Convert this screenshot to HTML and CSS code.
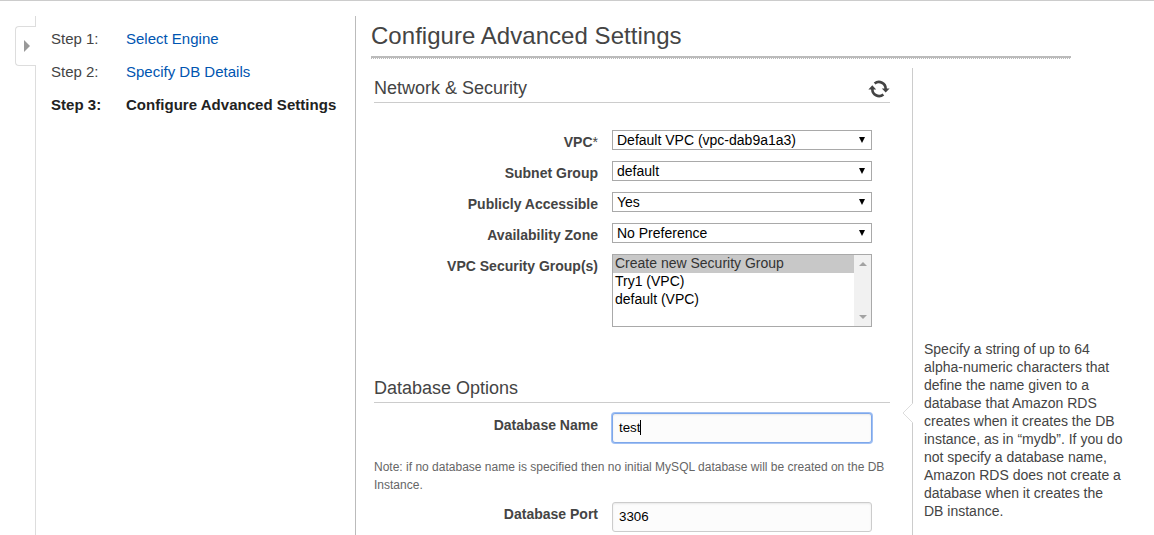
FILE: index.html
```html
<!DOCTYPE html>
<html lang="en">
<head>
<meta charset="utf-8">
<title>Configure Advanced Settings</title>
<link rel="stylesheet" href="styles.css">
</head>
<body>
<div class="page">
  <nav class="steps">
    <span class="collapse-tab"><svg width="6" height="12" viewBox="0 0 6 12"><path d="M0 0L6 6L0 12Z" fill="#999"/></svg></span>
    <div class="step"><span class="step-no">Step 1:</span><a class="step-link">Select Engine</a></div>
    <div class="step"><span class="step-no">Step 2:</span><a class="step-link">Specify DB Details</a></div>
    <div class="step current"><span class="step-no">Step 3:</span><span class="step-link">Configure Advanced Settings</span></div>
  </nav>
  <main class="main">
    <h1 class="title"><span>Configure Advanced Settings</span></h1>
    <div class="title-rule"></div>
    <div class="columns">
      <div class="form">
        <h2 class="section"><span>Network &amp; Security</span>
          <svg class="refresh" width="22" height="18" viewBox="0 0 22 18"><g fill="none" stroke="#444" stroke-width="2.6"><path d="M6.6 3.6A6.7 6.7 0 0 1 17.6 9.2"/><path d="M15.4 14.4A6.7 6.7 0 0 1 4.4 8.8"/></g><path d="M13.8 8.4H21.6L17.7 12.4ZM0.4 9.6H8.2L4.3 5.2Z" fill="#444"/></svg>
        </h2>
        <div class="rows">
          <div class="row"><label class="label">VPC<span class="star">*</span></label><div class="select"><span>Default VPC (vpc-dab9a1a3)</span><i class="arrow"></i></div></div>
          <div class="row"><label class="label">Subnet Group</label><div class="select"><span>default</span><i class="arrow"></i></div></div>
          <div class="row"><label class="label">Publicly Accessible</label><div class="select"><span>Yes</span><i class="arrow"></i></div></div>
          <div class="row"><label class="label">Availability Zone</label><div class="select"><span>No Preference</span><i class="arrow"></i></div></div>
          <div class="row"><label class="label">VPC Security Group(s)</label>
            <div class="listbox">
              <div class="options"><div class="option selected">Create new Security Group</div><div class="option">Try1 (VPC)</div><div class="option">default (VPC)</div></div>
              <div class="scrollbar"><i class="up"></i><i class="down"></i></div>
            </div>
          </div>
        </div>
        <h2 class="section database"><span>Database Options</span></h2>
        <div class="row field name"><label class="label">Database Name</label><div class="input focused"><span>test</span><i class="caret"></i></div></div>
        <p class="note">Note: if no database name is specified then no initial MySQL database will be created on the DB<br>Instance.</p>
        <div class="row field"><label class="label">Database Port</label><div class="input"><span>3306</span></div></div>
      </div>
      <aside class="help">
        <svg class="pointer" width="11" height="20" viewBox="0 0 11 20"><path d="M11 0L1 10L11 20" fill="#fff" stroke="#ddd"/></svg>
        <p class="help-text">Specify a string of up to 64<br>alpha-numeric characters that<br>define the name given to a<br>database that Amazon RDS<br>creates when it creates the DB<br>instance, as in “mydb”. If you do<br>not specify a database name,<br>Amazon RDS does not create a<br>database when it creates the<br>DB instance.</p>
      </aside>
    </div>
  </main>
</div>
</body>
</html>
```
FILE: styles.css
```css
* { box-sizing: border-box; }
body { margin: 0; background: #fff; color: #444; font-family: "Liberation Sans", Arial, sans-serif; font-size: 14px; overflow: hidden; }
h1, h2, p { margin: 0; font-weight: normal; }
.page { height: 535px; border-top: 1px solid #ccc; padding: 15px 0 0 35px; display: flex; overflow: hidden; }
.steps { position: relative; width: 321px; height: 519px; flex: none; border-left: 1px solid #ddd; border-right: 1px solid #bbb; padding: 6px 0 0 15px; }
.collapse-tab { position: absolute; left: -21px; top: 10px; width: 21px; height: 40px; background: #fff; border: 1px solid #ddd; border-right: 0; border-radius: 4px 0 0 4px; display: flex; align-items: center; padding-left: 8px; }
.step { display: flex; height: 33px; line-height: 33px; font-size: 15px; }
.step-no { width: 75px; }
a.step-link { color: #0055b1; }
.current { color: #222; font-weight: bold; letter-spacing: 0.03px; }
.main { width: 715px; padding-left: 15px; flex: none; }
.title { height: 40px; line-height: 40px; font-size: 24px; letter-spacing: 0.04px; }
.title-rule { height: 3px; border-top: 2px solid #bbb; background: repeating-linear-gradient(90deg, #bbb 0 1px, #fff 1px 2px); }
.columns { display: flex; padding: 9px 0 0 3px; }
.form { width: 516px; flex: none; }
.section { display: flex; justify-content: space-between; align-items: center; height: 35px; border-bottom: 1px solid #ccc; font-size: 18px; padding-top: 7px; }
.rows { display: flex; flex-direction: column; gap: 11px; padding-top: 27px; }
.row { display: flex; }
.label { width: 224px; margin-right: 14px; text-align: right; font-weight: bold; line-height: 24px; height: 20px; }
.star { font-weight: normal; }
.select { width: 260px; height: 20px; border: 1px solid #a9a9a9; color: #000; padding: 0 6px 0 4px; display: flex; align-items: center; justify-content: space-between; line-height: 18px; }
.arrow { border: 3px solid transparent; border-top: 6px solid #000; border-bottom: 0; }
.listbox { width: 260px; height: 73px; border: 1px solid #a9a9a9; display: flex; color: #000; }
.options { flex: 1; }
.option { height: 18px; line-height: 17px; padding-left: 2px; }
.selected { background: #c8c8c8; color: #333; }
.scrollbar { width: 17px; background: #f1f1f1; display: flex; flex-direction: column; justify-content: space-between; align-items: center; padding: 7px 0; }
.up { border: 4px solid transparent; border-top: 0; border-bottom-color: #a3a3a3; }
.down { border: 4px solid transparent; border-bottom: 0; border-top-color: #a3a3a3; }
.database { margin-top: 41px; }
.name { margin-top: 10px; }
.input { width: 260px; height: 30px; border: 1px solid #ccc; border-radius: 3px; background: #fcfcfc; box-shadow: inset 0 1px 2px #e8e8e8; color: #000; font-size: 13.33px; line-height: 16px; padding: 0 0 1px 6px; display: flex; align-items: center; }
.focused { border-color: #7da7ea; box-shadow: 0 0 0 1px #a0c0f4, inset 0 1px 2px #e8e8e8; }
.caret { width: 1px; height: 15px; background: #000; }
.note { margin: 15px 0 8px; line-height: 18px; font-size: 12px; color: #666; white-space: nowrap; letter-spacing: 0.005px; }
.help { position: relative; width: 242px; height: 480px; margin-left: 22px; flex: none; border-left: 1px solid #ccc; padding: 272px 0 0 11px; }
.pointer { position: absolute; left: -11px; top: 335px; }
.help-text { line-height: 18px; white-space: nowrap; }
```
